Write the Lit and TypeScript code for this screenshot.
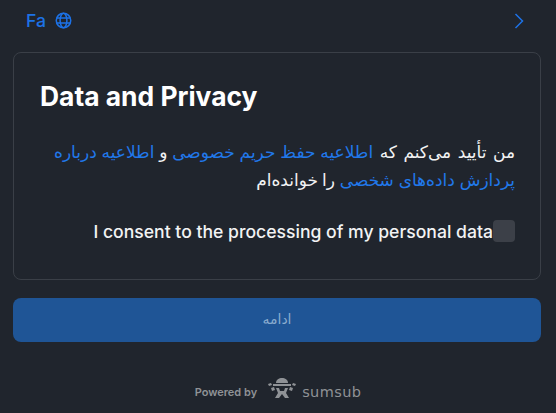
import { LitElement, html, css } from "lit";
import { customElement } from "lit/decorators.js";

@customElement("app-root")
export class AppRoot extends LitElement {
  static styles = css`
    :host {
      display: block;
      width: 556px;
      height: 413px;
      background: #20252d;
      font-family: Inter, "DejaVu Sans", sans-serif;
      color: #fff;
      overflow: hidden;
    }
    .top {
      height: 41px;
      padding: 0 32px 0 26px;
      display: flex;
      align-items: center;
      justify-content: space-between;
      color: #1d72e6;
    }
    .lang {
      display: flex;
      align-items: center;
      gap: 9px;
      font-size: 17.6px;
      font-weight: 500;
    }
    .lang svg, .top > svg { display: block; }
    .card {
      margin: 11px 15px 0 13px;
      height: 228px;
      box-sizing: border-box;
      border: 1px solid #3a3f47;
      border-radius: 8px;
      padding: 26px 25px 0 26px;
    }
    h1 {
      margin: 0;
      font-size: 26.4px;
      line-height: 34px;
      font-weight: 700;
    }
    .body {
      margin: 25px 0 0;
      direction: rtl;
      font-size: 17px;
      line-height: 28px;
      color: #f2f3f4;
    }
    .lead { word-spacing: 1.75px; }
    .tail { word-spacing: -0.8px; }
    .link { color: #2178ea; }
    .consent {
      margin-top: 26px;
      display: flex;
      justify-content: flex-end;
      align-items: center;
      font-size: 17.6px;
      font-weight: 500;
      color: #f2f3f4;
    }
    .box {
      width: 22px;
      height: 22px;
      background: #3c4048;
      border-radius: 4px;
    }
    .btn {
      margin: 18px 15px 0 13px;
      height: 44px;
      border-radius: 8px;
      background: #1f5596;
      color: #8aaccf;
      display: flex;
      align-items: center;
      justify-content: center;
      font-size: 14px;
      padding-bottom: 4px;
      box-sizing: border-box;
    }
    .foot {
      margin-top: 36px;
      display: flex;
      align-items: center;
      justify-content: center;
      gap: 8px;
      color: #8f9296;
      font-size: 11px;
      font-weight: 600;
    }
    .logo { margin: 0 0 6px 2px; }
    .brand {
      font-family: "DejaVu Sans", sans-serif;
      font-size: 14.5px;
      font-weight: 500;
      letter-spacing: 0.4px;
      margin-left: -3px;
    }
  `;

  render() {
    return html`
      <div class="top">
        <div class="lang">
          <span>Fa</span>
          <svg width="17" height="17" viewBox="0 0 17 17" fill="none" stroke="currentColor" stroke-width="1.5">
            <circle cx="8.5" cy="8.5" r="7.25"></circle>
            <ellipse cx="8.5" cy="8.5" rx="3.4" ry="7.25"></ellipse>
            <path d="M1.6 6h13.8M1.6 11h13.8"></path>
          </svg>
        </div>
        <svg width="10" height="16" viewBox="0 0 10 16" fill="none" stroke="currentColor" stroke-width="1.5">
          <path d="M1.5 1l7 7-7 7"></path>
        </svg>
      </div>
      <div class="card">
        <h1>Data and Privacy</h1>
        <p class="body"><span class="lead">من تأیید می‌کنم که </span><span class="link">اطلاعیه حفظ حریم خصوصی</span> و <span class="link">اطلاعیه درباره پردازش داده‌های شخصی</span> <span class="tail">را خوانده‌ام</span></p>
        <div class="consent">
          <span>I consent to the processing of my personal data</span>
          <div class="box"></div>
        </div>
      </div>
      <div class="btn" dir="rtl">ادامه</div>
      <div class="foot">
        <span>Powered by</span>
        <svg class="logo" width="30" height="22" viewBox="0 0 30 22" fill="#8f9296">
          <path d="M9 5C9 1.5 12 0 15 0s6 1.5 6 5z"></path>
          <path d="M6 6h18v2H6z"></path>
          <path d="M1 6l3-1 1 2-3 1zM29 6l-3-1-1 2 3 1zM4 10l3-1 1 3-3 1zM26 10l-3-1-1 3 3 1z"></path>
          <path d="M9 10h3l1 3h4l1-3h3l-2 5 3 5h-4l-3-4-3 4H8l3-5z"></path>
        </svg>
        <span class="brand">sumsub</span>
      </div>
    `;
  }
}
